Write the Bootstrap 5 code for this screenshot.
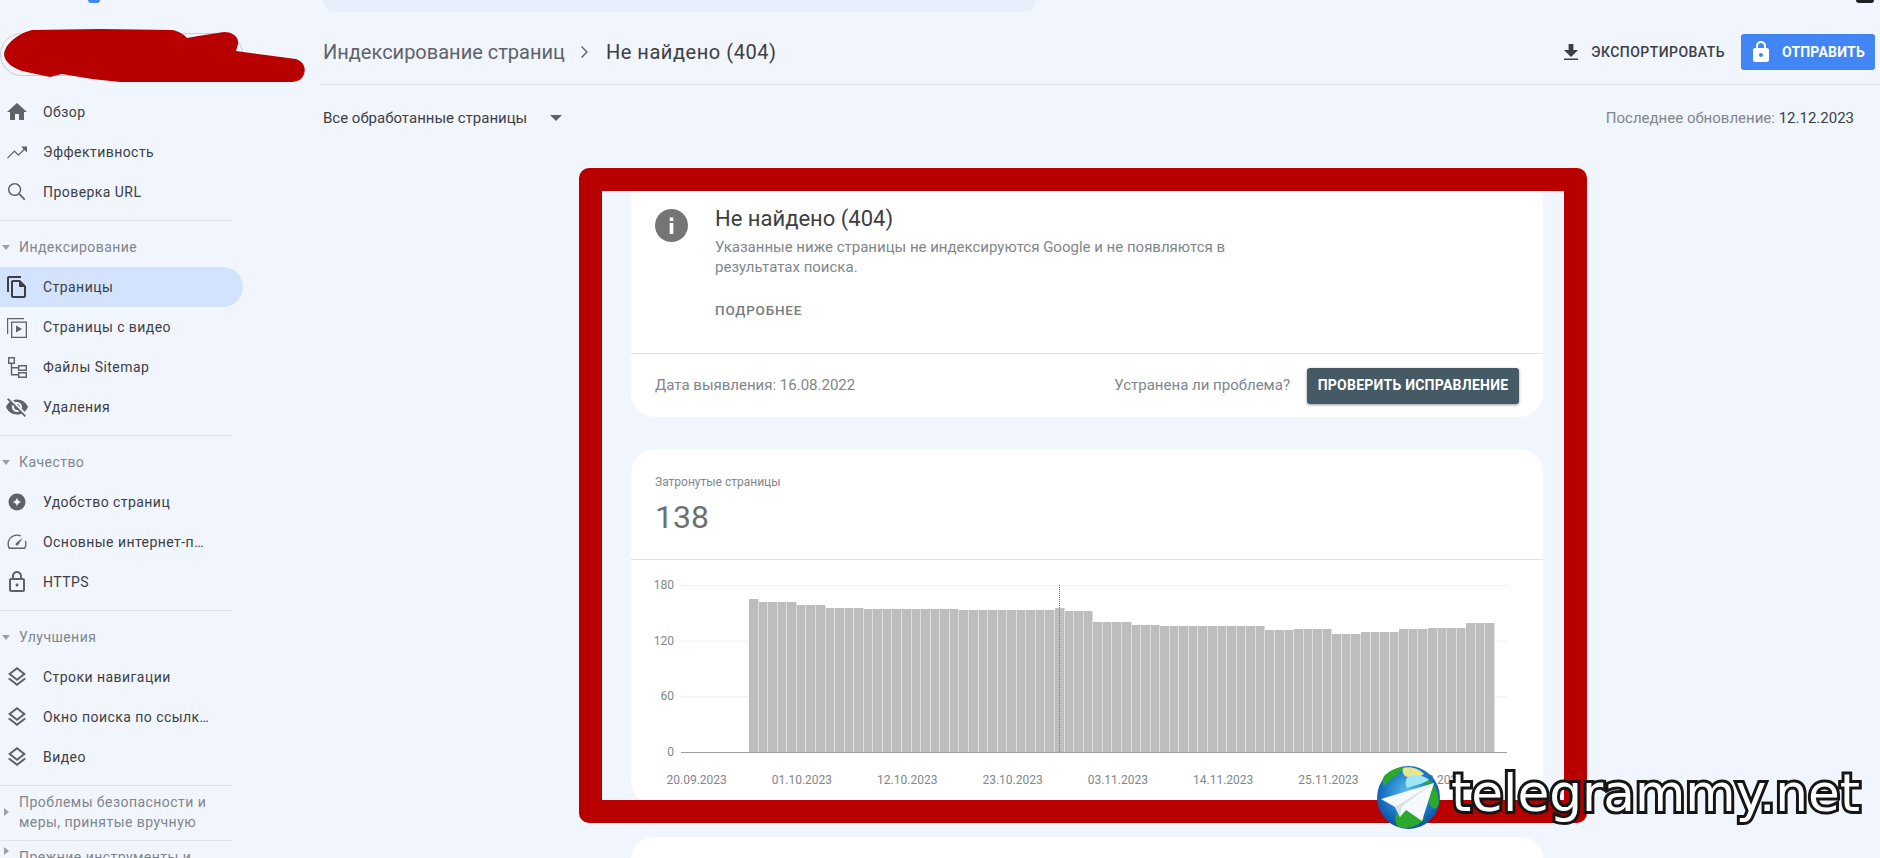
<!DOCTYPE html>
<html lang="ru">
<head>
<meta charset="utf-8">
<title>Не найдено (404)</title>
<link href="https://cdn.jsdelivr.net/npm/bootstrap@5.3.0/dist/css/bootstrap.min.css" rel="stylesheet">
<style>
html,body{height:858px;overflow:hidden}
body{background:#f1f5fd;font-family:Roboto,"Liberation Sans",sans-serif;color:#3c4043;font-size:14px;position:relative}
.app-shell{height:858px;overflow:hidden}
.side{width:320px;flex:none;position:relative;height:858px;overflow:hidden}
.logo-bit{width:12px;height:3px;margin-left:88px;background:#4285f4;border-radius:0 0 6px 6px}
.prop-pill{width:243px;height:43px;margin-top:30px;margin-bottom:16px;border:1px solid #c9cdd2;border-radius:22px}
.scribble{position:absolute;left:0;top:0}
.side-item{height:40px;width:243px;padding:0 0 0 5px;color:#3c4043;letter-spacing:.45px;border-radius:0 20px 20px 0;gap:14px}
.side-item:hover{color:#3c4043}
.side-item.on{background:#d3e3fd}
.side-item svg{flex:none;fill:#5f6368}
.side-item.on svg{fill:#3c4043}
.side-txt{max-width:168px}
.side-rule{width:232px;margin:8px 0 6px;border:0;border-top:1px solid #dfe3e9;opacity:1}
.sec-head{height:40px;color:#80868b;letter-spacing:.45px;gap:9px;padding-left:1px;width:232px}
.sec-head.two{line-height:20px}
.sec-head.cut{height:20px;align-items:flex-start!important}
.tri-d{width:0;height:0;border:4px solid transparent;border-top:5px solid #9aa0a6;border-bottom:0;flex:none;margin-left:1px}
.tri-r{width:0;height:0;border:4px solid transparent;border-left:5px solid #9aa0a6;border-right:0;flex:none;margin-left:3px;margin-right:1px}
.page-main{min-width:0}
.top-strip{height:12px}
.search-bit{width:713px;height:12px;margin-left:3px;background:#e7edfb;border-radius:0 0 22px 22px}
.avatar-bit{position:absolute;left:1536px;top:0;width:18px;height:3px;border-radius:0 0 9px 9px;background:#202124}
.head-bar{height:73px;border-bottom:1px solid #dfe3e9;padding:8px 5px 0 3px}
.crumb-a{font-size:20px;color:#5f6368}
.crumb-b{font-size:20px;color:#3c4043;font-weight:400;letter-spacing:.55px}
.crumb-chev{margin:0 16px 0 15px;fill:#5f6368}
.btn-exp{color:#3c4043;font-weight:500;font-size:14px;letter-spacing:.45px;padding:0;margin-right:16px;border:0;gap:8px}
.btn-send{background:#4285f4;border:0;border-radius:3px;color:#fff;font-weight:700;font-size:14px;letter-spacing:.2px;height:36px;width:134px;padding:0 8px 0 8px;gap:9px}
.filter-bar{height:66px;padding:0 26px 0 3px;font-size:15px}
.last-upd{color:#80868b}
.last-upd b{font-weight:400;color:#3c4043}
.tri-f{width:0;height:0;border:6px solid transparent;border-top:6px solid #5f6368;border-bottom:0;margin-left:23px}
.content-col{margin-left:311px;margin-top:19px;width:912px;gap:32px}
.pane{border:0;border-radius:24px;background:#fff;overflow:hidden}
.pane-one{height:247px}
.pane-two{height:356px}
.pane-three{height:22px;border-radius:24px 24px 0 0}
.info-top{height:184px;padding:35px 24px 0;gap:27px;border-bottom:1px solid #e0e0e0}
.info-dot{width:33px;height:33px;flex:none;margin-top:4px}
.info-title{font-size:22px;line-height:28px;color:#3c4043;margin:0 0 4px}
.info-desc{font-size:15px;line-height:20px;color:#80868b;width:520px;margin:0}
.info-more{font-size:13.5px;line-height:20px;font-weight:500;color:#757b80;letter-spacing:.8px;margin-top:23px}
.info-foot{height:63px;padding:0 24px;color:#80868b;font-size:15px}
.btn-verify{background:#455a64;color:#fff;font-size:14px;font-weight:700;letter-spacing:.25px;height:36px;width:212px;padding:0;border:0;border-radius:3px;box-shadow:0 1px 3px rgba(0,0,0,.4);margin-left:17px}
.btn-verify:hover{background:#455a64;color:#fff}
.stat-top{height:111px;padding:25px 24px 0;border-bottom:1px solid #e0e0e0}
.stat-lbl{font-size:12px;line-height:16px;color:#80868b}
.stat-num{font-size:32px;line-height:40px;color:#6b7074;margin-top:7px}
.chart-wrap{padding-top:25px}
.y-col{width:43px;height:183px;margin-top:-8px;margin-right:7px;font-size:12px;line-height:16px;color:#80868b;text-align:right}
.plot{width:826px;height:168px;padding:0 12px 0 68px;position:relative;border-bottom:1px solid #9e9e9e;background-image:linear-gradient(#eeeeee 1px,transparent 1px);background-size:100% 55.67px}
.plot-bar{flex:1 1 0;background:#bdbdbd;border-right:1px solid #dedede}
.plot-mark{position:absolute;left:378px;top:0;height:167px;border-left:1px dotted #777}
.x-row{margin:12px 0 0 13px;font-size:12px;line-height:16px;color:#80868b}
.x-row span{width:105.3px;text-align:center;flex:none}
.red-frame{position:absolute;left:579px;top:168px;width:1008px;height:655px;border:23px solid #b90000;border-radius:10px;pointer-events:none}
.water{position:absolute;left:1377px;top:766px;gap:11px;height:63px}
.water-txt{font-family:"DejaVu Sans",sans-serif;font-size:51.7px;line-height:63px;color:#fff;-webkit-text-stroke:6px #151515;paint-order:stroke fill;margin-top:-9px}
</style>
</head>
<body>
<div class="d-flex app-shell">
  <aside class="side">
    <div class="logo-bit"></div>
    <div class="prop-pill"></div>
    <svg class="scribble" width="320" height="100" viewBox="0 0 320 100"><path fill="#b90000" d="M4 54C6 42 20 33 32 30L100 29 172 30C180 31 185 36 187 38L198 36 224 32C234 32 239 38 238 44L236 51 296 59C304 62 306 68 304 74 302 80 297 82 290 82L120 82 92 79 62 74 50 77 22 71C10 67 4 60 4 54Z"/></svg>
    <nav class="nav flex-column">
      <a class="nav-link side-item d-flex align-items-center" href="#"><svg width="24" height="24" viewBox="0 0 24 24"><path d="M10 20v-6h4v6h5v-8h3L12 3 2 12h3v8z"/></svg><span>Обзор</span></a>
      <a class="nav-link side-item d-flex align-items-center" href="#"><svg width="24" height="24" viewBox="0 0 24 24"><path d="M16 6.5l2.6 2.6-5.2 5.2-4-4L2 17.7l.9.9 6.5-6.6 4 4 6.1-6.1L22 12.4V6.5z"/></svg><span>Эффективность</span></a>
      <a class="nav-link side-item d-flex align-items-center" href="#"><svg width="24" height="24" viewBox="0 0 24 24"><path d="M15.5 14h-.6l-.3-.3C15.7 12.6 16.3 11.1 16.3 9.5 16.3 5.9 13.3 3 9.7 3S3 5.9 3 9.5 6 16 9.7 16c1.6 0 3-.6 4.2-1.6l.3.3v.6l5 5 1.2-1.2-4.9-5.1zm-5.8.6c-2.9 0-5.2-2.3-5.2-5.1s2.3-5.1 5.2-5.1 5.1 2.3 5.1 5.1-2.3 5.1-5.1 5.1z"/></svg><span>Проверка URL</span></a>
      <hr class="side-rule">
      <div class="sec-head d-flex align-items-center"><i class="tri-d"></i><span>Индексирование</span></div>
      <a class="nav-link side-item on d-flex align-items-center" href="#"><svg width="24" height="24" viewBox="0 0 24 24"><path d="M16 1H4c-1.1 0-2 .9-2 2v14h2V3h12V1zm-1 4H8c-1.1 0-1.99.9-1.99 2L6 21c0 1.1.89 2 1.99 2H19c1.1 0 2-.9 2-2V11l-6-6zM8 21V7h6v5h5v9H8z"/></svg><span>Страницы</span></a>
      <a class="nav-link side-item d-flex align-items-center" href="#"><svg width="24" height="24" viewBox="0 0 24 24"><path d="M2 3h17v1.2H3.2V19H2zM6 6.5h16V23H6zm1.3 1.3v13.9h13.4V7.8zM11 10.5v7l6-3.5z"/></svg><span>Страницы с видео</span></a>
      <a class="nav-link side-item d-flex align-items-center" href="#"><svg width="24" height="24" viewBox="0 0 24 24"><path d="M3 2h7v7H7.2v3H13v-2h9v6h-9v-2.6H7.2V19H13v-2h9v6h-9v-2.6H5.8V9H3zm1.4 1.4v4.2h4.2V3.4zm10 8v3.2h6.2v-3.2zm0 7v3.2h6.2v-3.2z"/></svg><span>Файлы Sitemap</span></a>
      <a class="nav-link side-item d-flex align-items-center" href="#"><svg width="24" height="24" viewBox="0 0 24 24"><path d="M12 7c2.76 0 5 2.24 5 5 0 .65-.13 1.26-.36 1.83l2.92 2.92c1.51-1.26 2.7-2.89 3.43-4.75-1.73-4.39-6-7.5-11-7.5-1.4 0-2.74.25-3.98.7l2.16 2.16C10.74 7.13 11.35 7 12 7zM2 4.27l2.28 2.28.46.46C3.08 8.3 1.78 10.02 1 12c1.73 4.39 6 7.5 11 7.5 1.55 0 3.03-.3 4.38-.84l.42.42L19.73 22 21 20.73 3.27 3 2 4.27zM7.53 9.8l1.55 1.55c-.05.21-.08.43-.08.65 0 1.66 1.34 3 3 3 .22 0 .44-.03.65-.08l1.55 1.55c-.67.33-1.41.53-2.2.53-2.76 0-5-2.24-5-5 0-.79.2-1.53.53-2.2zm4.31-.78l3.15 3.15.02-.16c0-1.66-1.34-3-3-3l-.17.01z"/></svg><span>Удаления</span></a>
      <hr class="side-rule">
      <div class="sec-head d-flex align-items-center"><i class="tri-d"></i><span>Качество</span></div>
      <a class="nav-link side-item d-flex align-items-center" href="#"><svg width="24" height="24" viewBox="0 0 24 24"><path fill-rule="evenodd" d="M12 3.5a8.5 8.5 0 1 1 0 17 8.5 8.5 0 0 1 0-17zm0 4c-.5 2.6-1.9 4-4.5 4.5 2.6.5 4 1.9 4.5 4.5.5-2.6 1.9-4 4.5-4.5-2.6-.5-4-1.9-4.5-4.5z"/></svg><span>Удобство страниц</span></a>
      <a class="nav-link side-item d-flex align-items-center" href="#"><svg width="24" height="24" viewBox="0 0 24 24"><path d="M12 4.5c-5.2 0-9.5 4.2-9.5 9.4 0 1.8.5 3.5 1.4 5h16.2c.9-1.5 1.4-3.2 1.4-5 0-1.2-.2-2.3-.6-3.3l-1.1.9c.3.8.4 1.6.4 2.4 0 1.4-.4 2.6-1 3.7H4.8c-.6-1.1-1-2.3-1-3.7 0-4.5 3.7-8.1 8.2-8.1 1.2 0 2.2.2 3.2.7l1-1C15 4.9 13.6 4.5 12 4.5zm5.9 3.3l-6.8 5.1c-.7.5-.8 1.5-.2 2.2.6.6 1.6.6 2.2-.1z"/></svg><span class="side-txt text-truncate">Основные интернет-показатели</span></a>
      <a class="nav-link side-item d-flex align-items-center" href="#"><svg width="24" height="24" viewBox="0 0 24 24"><path d="M18 8h-1V6c0-2.76-2.24-5-5-5S7 3.24 7 6v2H6c-1.1 0-2 .9-2 2v10c0 1.1.9 2 2 2h12c1.1 0 2-.9 2-2V10c0-1.1-.9-2-2-2zM9 6c0-1.66 1.34-3 3-3s3 1.34 3 3v2H9V6zm9 14H6V10h12v10zm-6-3.5c.8 0 1.5-.7 1.5-1.5s-.7-1.5-1.5-1.5-1.5.7-1.5 1.5.7 1.5 1.5 1.5z"/></svg><span>HTTPS</span></a>
      <hr class="side-rule">
      <div class="sec-head d-flex align-items-center"><i class="tri-d"></i><span>Улучшения</span></div>
      <a class="nav-link side-item d-flex align-items-center" href="#"><svg width="24" height="24" viewBox="0 0 24 24"><path d="M11.99 18.54l-7.37-5.73L3 14.07l9 7 9-7-1.63-1.27zM12 16l7.36-5.73L21 9l-9-7-9 7 1.63 1.27L12 16zm0-11.47L17.74 9 12 13.47 6.26 9 12 4.53z"/></svg><span>Строки навигации</span></a>
      <a class="nav-link side-item d-flex align-items-center" href="#"><svg width="24" height="24" viewBox="0 0 24 24"><path d="M11.99 18.54l-7.37-5.73L3 14.07l9 7 9-7-1.63-1.27zM12 16l7.36-5.73L21 9l-9-7-9 7 1.63 1.27L12 16zm0-11.47L17.74 9 12 13.47 6.26 9 12 4.53z"/></svg><span class="side-txt text-truncate">Окно поиска по ссылкам сайта</span></a>
      <a class="nav-link side-item d-flex align-items-center" href="#"><svg width="24" height="24" viewBox="0 0 24 24"><path d="M11.99 18.54l-7.37-5.73L3 14.07l9 7 9-7-1.63-1.27zM12 16l7.36-5.73L21 9l-9-7-9 7 1.63 1.27L12 16zm0-11.47L17.74 9 12 13.47 6.26 9 12 4.53z"/></svg><span>Видео</span></a>
      <hr class="side-rule">
      <div class="sec-head two d-flex align-items-center"><i class="tri-r"></i><span>Проблемы безопасности и меры, принятые вручную</span></div>
      <hr class="side-rule">
      <div class="sec-head two cut d-flex align-items-center"><i class="tri-r"></i><span>Прежние инструменты и отчеты</span></div>
    </nav>
  </aside>

  <main class="page-main flex-grow-1 position-relative">
    <div class="top-strip"><div class="search-bit"></div></div>
    <div class="avatar-bit"></div>
    <header class="head-bar d-flex align-items-center justify-content-between">
      <div class="d-flex align-items-center">
        <span class="crumb-a">Индексирование страниц</span>
        <svg class="crumb-chev" width="10" height="14" viewBox="0 0 10 14"><path d="M2 1l6 6-6 6-1-1 5-5-5-5z"/></svg>
        <span class="crumb-b">Не найдено (404)</span>
      </div>
      <div class="d-flex align-items-center">
        <button class="btn btn-exp d-flex align-items-center" type="button"><svg width="24" height="24" viewBox="0 0 24 24" fill="#3c4043"><path d="M19 10h-4.6V4H9.6v6H5l7 7 7-7zM5 18.5V20h14v-1.5z"/></svg>ЭКСПОРТИРОВАТЬ</button>
        <button class="btn btn-primary btn-send d-flex align-items-center" type="button"><svg width="24" height="24" viewBox="0 0 24 24" fill="#fff"><path d="M18 8h-1V6c0-2.76-2.24-5-5-5S7 3.24 7 6v2H6c-1.1 0-2 .9-2 2v10c0 1.1.9 2 2 2h12c1.1 0 2-.9 2-2V10c0-1.1-.9-2-2-2zm-6 9c-1.1 0-2-.9-2-2s.9-2 2-2 2 .9 2 2-.9 2-2 2zm3.1-9H8.9V6c0-1.71 1.39-3.1 3.1-3.1 1.71 0 3.1 1.39 3.1 3.1v2z"/></svg>ОТПРАВИТЬ</button>
      </div>
    </header>
    <div class="filter-bar d-flex align-items-center justify-content-between">
      <div class="d-flex align-items-center"><span>Все обработанные страницы</span><i class="tri-f"></i></div>
      <div class="last-upd">Последнее обновление: <b>12.12.2023</b></div>
    </div>

    <div class="content-col d-flex flex-column">
      <section class="card pane pane-one">
        <div class="info-top d-flex">
          <svg class="info-dot" viewBox="0 0 33 33"><circle cx="16.5" cy="16.5" r="16.5" fill="#757575"/><rect x="14.7" y="14" width="3.6" height="11" fill="#fff"/><rect x="14.7" y="8.4" width="3.6" height="3.6" fill="#fff"/></svg>
          <div>
            <h2 class="info-title fw-normal">Не найдено (404)</h2>
            <p class="info-desc">Указанные ниже страницы не индексируются Google и не появляются в результатах поиска.</p>
            <div class="info-more">ПОДРОБНЕЕ</div>
          </div>
        </div>
        <div class="info-foot d-flex align-items-center justify-content-between">
          <span>Дата выявления: 16.08.2022</span>
          <div class="d-flex align-items-center"><span>Устранена ли проблема?</span><button class="btn btn-verify" type="button">ПРОВЕРИТЬ ИСПРАВЛЕНИЕ</button></div>
        </div>
      </section>

      <section class="card pane pane-two">
        <div class="stat-top">
          <div class="stat-lbl">Затронутые страницы</div>
          <div class="stat-num">138</div>
        </div>
        <div class="chart-wrap">
          <div class="d-flex">
            <div class="y-col d-flex flex-column justify-content-between"><span>180</span><span>120</span><span>60</span><span>0</span></div>
            <div class="plot d-flex align-items-end">
              <i class="plot-bar" style="height:153px"></i><i class="plot-bar" style="height:150px"></i><i class="plot-bar" style="height:150px"></i><i class="plot-bar" style="height:150px"></i><i class="plot-bar" style="height:150px"></i><i class="plot-bar" style="height:147px"></i><i class="plot-bar" style="height:147px"></i><i class="plot-bar" style="height:147px"></i><i class="plot-bar" style="height:144px"></i><i class="plot-bar" style="height:144px"></i><i class="plot-bar" style="height:144px"></i><i class="plot-bar" style="height:144px"></i><i class="plot-bar" style="height:143px"></i><i class="plot-bar" style="height:143px"></i><i class="plot-bar" style="height:143px"></i><i class="plot-bar" style="height:143px"></i><i class="plot-bar" style="height:143px"></i><i class="plot-bar" style="height:143px"></i><i class="plot-bar" style="height:143px"></i><i class="plot-bar" style="height:143px"></i><i class="plot-bar" style="height:143px"></i><i class="plot-bar" style="height:143px"></i><i class="plot-bar" style="height:142px"></i><i class="plot-bar" style="height:142px"></i><i class="plot-bar" style="height:142px"></i><i class="plot-bar" style="height:142px"></i><i class="plot-bar" style="height:142px"></i><i class="plot-bar" style="height:142px"></i><i class="plot-bar" style="height:142px"></i><i class="plot-bar" style="height:142px"></i><i class="plot-bar" style="height:142px"></i><i class="plot-bar" style="height:142px"></i><i class="plot-bar" style="height:144px"></i><i class="plot-bar" style="height:141px"></i><i class="plot-bar" style="height:141px"></i><i class="plot-bar" style="height:141px"></i><i class="plot-bar" style="height:130px"></i><i class="plot-bar" style="height:130px"></i><i class="plot-bar" style="height:130px"></i><i class="plot-bar" style="height:130px"></i><i class="plot-bar" style="height:127px"></i><i class="plot-bar" style="height:127px"></i><i class="plot-bar" style="height:127px"></i><i class="plot-bar" style="height:126px"></i><i class="plot-bar" style="height:126px"></i><i class="plot-bar" style="height:126px"></i><i class="plot-bar" style="height:126px"></i><i class="plot-bar" style="height:126px"></i><i class="plot-bar" style="height:126px"></i><i class="plot-bar" style="height:126px"></i><i class="plot-bar" style="height:126px"></i><i class="plot-bar" style="height:126px"></i><i class="plot-bar" style="height:126px"></i><i class="plot-bar" style="height:126px"></i><i class="plot-bar" style="height:122px"></i><i class="plot-bar" style="height:122px"></i><i class="plot-bar" style="height:122px"></i><i class="plot-bar" style="height:123px"></i><i class="plot-bar" style="height:123px"></i><i class="plot-bar" style="height:123px"></i><i class="plot-bar" style="height:123px"></i><i class="plot-bar" style="height:118px"></i><i class="plot-bar" style="height:118px"></i><i class="plot-bar" style="height:118px"></i><i class="plot-bar" style="height:120px"></i><i class="plot-bar" style="height:120px"></i><i class="plot-bar" style="height:120px"></i><i class="plot-bar" style="height:120px"></i><i class="plot-bar" style="height:123px"></i><i class="plot-bar" style="height:123px"></i><i class="plot-bar" style="height:123px"></i><i class="plot-bar" style="height:124px"></i><i class="plot-bar" style="height:124px"></i><i class="plot-bar" style="height:124px"></i><i class="plot-bar" style="height:124px"></i><i class="plot-bar" style="height:129px"></i><i class="plot-bar" style="height:129px"></i><i class="plot-bar" style="height:129px"></i>
              <span class="plot-mark"></span>
            </div>
          </div>
          <div class="x-row d-flex"><span>20.09.2023</span><span>01.10.2023</span><span>12.10.2023</span><span>23.10.2023</span><span>03.11.2023</span><span>14.11.2023</span><span>25.11.2023</span><span>06.12.2023</span></div>
        </div>
      </section>

      <section class="card pane pane-three"></section>
    </div>
  </main>
</div>

<div class="red-frame"></div>
<div class="water d-flex align-items-center">
  <svg width="63" height="63" viewBox="0 0 63 63" aria-hidden="true">
    <defs><radialGradient id="gl" cx=".5" cy=".42" r=".62"><stop offset="0" stop-color="#5fc4ee"/><stop offset=".6" stop-color="#1d78c8"/><stop offset="1" stop-color="#0b4a9a"/></radialGradient></defs>
    <circle cx="31.5" cy="31.5" r="31.5" fill="url(#gl)"/>
    <path fill="#2ca82c" d="M8 9C16 2 22 1 30 1 24 5 16 12 7 20 5 17 5 12 8 9zM50 12C56 16 62 26 62 36 60 46 54 44 52 36 50 28 47 20 50 12zM20 46C30 42 42 46 48 52 40 62 28 64 20 60 18 56 18 50 20 46z"/>
    <path fill="#e9e58a" d="M26 2C34 0 42 3 47 8 42 12 34 13 28 10 26 8 25 5 26 2z"/>
    <path fill="#9fe6f6" d="M32 10C40 8 48 10 52 14 46 18 38 19 30 22 28 18 28 13 32 10z"/>
    <path fill="#f7fafd" d="M57 17 4 33 18 41 23 51 29 44 45 55z"/>
    <path fill="#d6e1ec" d="M57 17 18 41 23 51 25 40z"/>
  </svg>
  <span class="water-txt">telegrammy.net</span>
</div>
<script src="https://cdn.jsdelivr.net/npm/bootstrap@5.3.0/dist/js/bootstrap.bundle.min.js"></script>
</body>
</html>
